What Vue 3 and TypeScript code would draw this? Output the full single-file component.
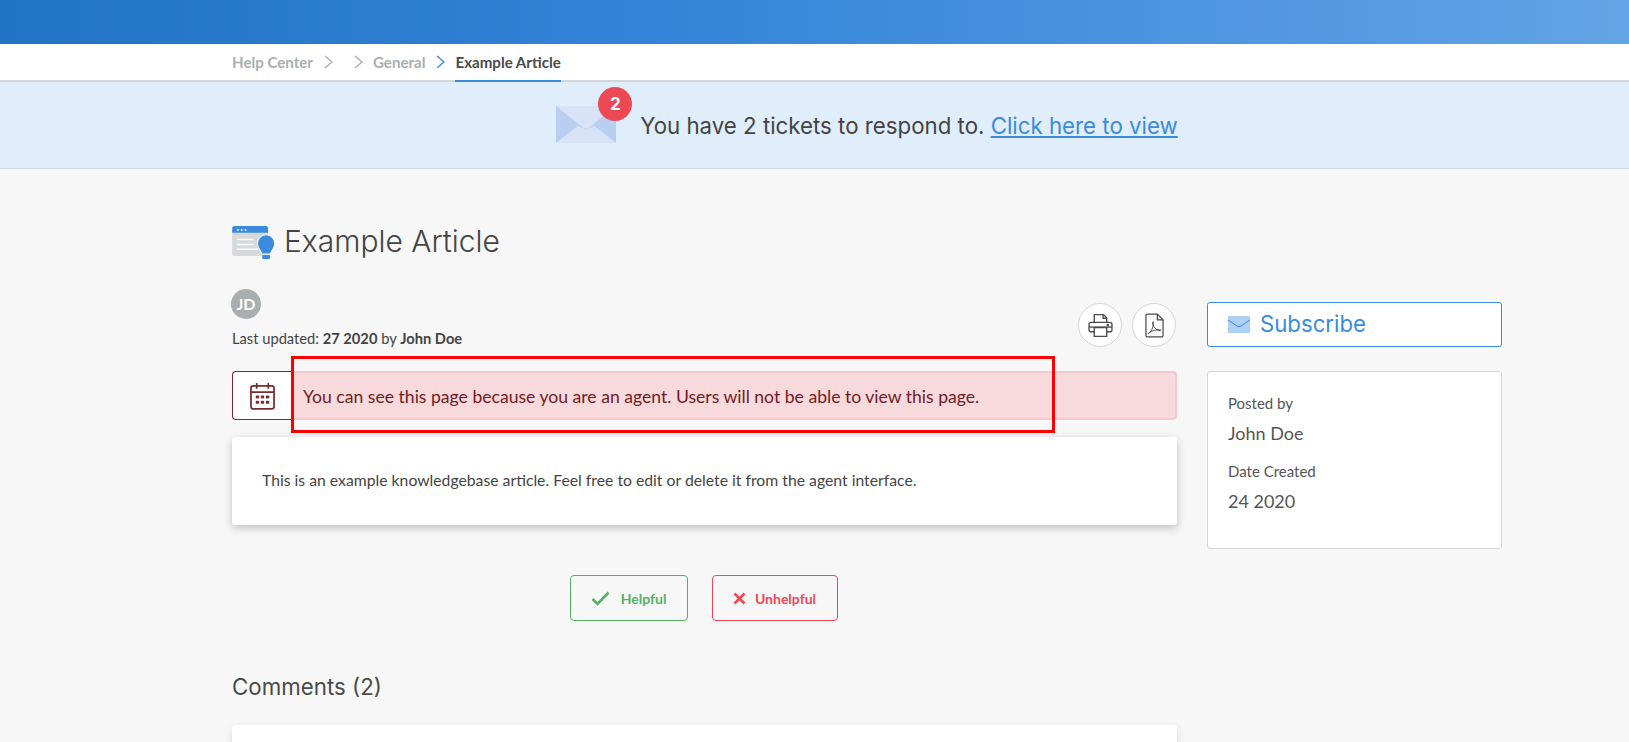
<script setup lang="ts">
const crumbs = [
  { label: 'Help Center', after: true },
  { label: '', after: true },
  { label: 'General', after: true, blue: true },
]
const details = [
  { label: 'Posted by', value: 'John Doe' },
  { label: 'Date Created', value: '24 2020' },
]
</script>

<template>
  <div class="page">
    <header class="topbar"></header>

    <nav class="crumbs">
      <template v-for="crumb in crumbs">
        <span v-if="crumb.label" class="crumb">{{ crumb.label }}</span>
        <svg class="chevron" :class="{ blue: crumb.blue }" viewBox="0 0 9 14" width="9" height="14">
          <path d="M1 1l7 6-7 6" fill="none" stroke="currentColor" stroke-width="1.4" />
        </svg>
      </template>
      <span class="crumb current">Example Article</span>
    </nav>

    <section class="banner">
      <div class="mail">
        <svg viewBox="0 0 60 38" width="60" height="38">
          <rect y="0" width="60" height="37" fill="#d8e3f8" />
          <path d="M0 37V1l24 18h12L60 1v36z" fill="#d8e3f8" />
          <path d="M0 0l26 21q4 3 8 0L60 0v37L38 20q-8 6-16 0L0 37z" fill="#b9cff1" />
          <path d="M60 37H0l22-17q8 6 16 0z" fill="#d8e3f8" />
        </svg>
        <span class="badge">2</span>
      </div>
      <p>You have 2 tickets to respond to. <a href="#">Click here to view</a></p>
    </section>

    <main class="content">
      <h1 class="title">
        <svg viewBox="0 0 44 34" width="43" height="33">
          <rect x="0" y="0" width="37" height="31" rx="2.5" fill="#d5d9da" />
          <path d="M0 7V2.5A2.5 2.5 0 0 1 2.5 0h32A2.5 2.5 0 0 1 37 2.5V7z" fill="#3a8bdf" />
          <circle cx="6" cy="4" r="1" fill="#fff" />
          <circle cx="10" cy="4" r="1" fill="#fff" />
          <circle cx="14" cy="4" r="1" fill="#fff" />
          <path d="M5 14h17M5 19h17M5 24h22" stroke="#fff" stroke-width="1.5" />
          <path d="M35 9a9 9 0 0 1 9 9c0 5-3.400 6.500-4.700 11h-8.600C29.400 24.500 26 23 26 18a9 9 0 0 1 9-9z" fill="#3a8bdf" stroke="#f7f7f7" stroke-width="1.200" />
          <rect x="31" y="30" width="8" height="4" rx="1" fill="#3a8bdf" />
        </svg>
        Example Article
      </h1>

      <div class="columns">
        <div class="main-col">
          <div class="meta-row">
            <div>
              <span class="avatar">JD</span>
              <p class="updated">Last updated: <b>27 2020</b> by <b>John Doe</b></p>
            </div>
            <div class="tools">
              <button class="tool">
                <svg viewBox="0 0 24 24" width="25" height="25" fill="none" stroke="#4a4a4a" stroke-width="1.300">
                  <path d="M6 9V1.500h9l3 3V9" />
                  <path d="M14.500 1.500v3.500H18" />
                  <path d="M6 18H2.500a1.500 1.500 0 0 1-1.500-1.500V11a2 2 0 0 1 2-2h18a2 2 0 0 1 2 2v5.500a1.500 1.500 0 0 1-1.500 1.500H18" />
                  <path d="M1 13.500h22" />
                  <path d="M6 14v8.500h12V14z" />
                  <circle cx="19" cy="11.500" r=".6" fill="#4a4a4a" />
                </svg>
              </button>
              <button class="tool">
                <svg viewBox="0 0 20 26" width="19" height="25" fill="none" stroke="#4a4a4a" stroke-width="1.300">
                  <path d="M1 2.500A1.500 1.500 0 0 1 2.500 1H13l6 6v16.500a1.500 1.500 0 0 1-1.500 1.500h-15A1.500 1.500 0 0 1 1 23.500z" />
                  <path d="M13 1v6h6" />
                  <path d="M3.500 21.500c3-1.500 5-6 5.500-11 .2-2-1-2-1-.5 0 4 4 8.500 8 8.500 1 0 1-1.200-.5-1.200-3.500 0-8 1.200-10.500 3-.6.5-1.500 1.200-1.500.7z" stroke-width="1" />
                </svg>
              </button>
            </div>
          </div>

          <div class="alert-row">
            <div class="alert-icon">
              <svg viewBox="0 0 26 29" width="25" height="28" fill="none" stroke="#7b2a30" stroke-width="1.800">
                <rect x="1" y="4" width="24" height="24" rx="2.500" />
                <path d="M1 10.500h24M7 1v6M19 1v6" />
                <g fill="#7b2a30" stroke="none">
                  <rect x="6" y="14" width="3.500" height="3" />
                  <rect x="11.200" y="14" width="3.500" height="3" />
                  <rect x="16.500" y="14" width="3.500" height="3" />
                  <rect x="6" y="19.500" width="3.500" height="3" />
                  <rect x="11.200" y="19.500" width="3.500" height="3" />
                  <rect x="16.500" y="19.500" width="3.500" height="3" />
                </g>
              </svg>
            </div>
            <div class="alert">You can see this page because you are an agent. Users will not be able to view this page.</div>
          </div>

          <article class="card">This is an example knowledgebase article. Feel free to edit or delete it from the agent interface.</article>

          <div class="votes">
            <button class="vote good">
              <svg viewBox="0 0 19 15" width="19" height="15">
                <path d="M1.500 8l5 5L17.500 1.500" fill="none" stroke="#55b065" stroke-width="2.600" />
              </svg>
              Helpful
            </button>
            <button class="vote bad">
              <svg viewBox="0 0 13 13" width="13" height="13">
                <path d="M1.500 1.500l10 10M11.500 1.500l-10 10" fill="none" stroke="#ec4856" stroke-width="2.600" />
              </svg>
              Unhelpful
            </button>
          </div>

          <h2 class="comments-title">Comments (2)</h2>
          <div class="comment-card"></div>
        </div>

        <aside class="side">
          <button class="subscribe">
            <svg viewBox="0 0 22 17" width="22" height="17">
              <rect width="22" height="17" rx="1" fill="#aed0f4" />
              <path d="M0 4l9 6q2 1.200 4 0l9-6" fill="none" stroke="#3a8bdf" stroke-width="1" />
            </svg>
            Subscribe
          </button>
          <div class="info">
            <div v-for="row in details" :key="row.label" class="info-row">
              <span class="info-label">{{ row.label }}</span>
              <span class="info-value">{{ row.value }}</span>
            </div>
          </div>
        </aside>
      </div>

      <div class="annotation"></div>
    </main>
  </div>
</template>

<style>
html, body { margin: 0; background: #f7f7f7; }
</style>

<style scoped>
.page {
  height: 742px;
  overflow: hidden;
  background: #f7f7f7;
  font-family: Lato, "Liberation Sans", sans-serif;
  color: #444;
}
.topbar {
  height: 44px;
  background: linear-gradient(90deg, #2173c5 0%, #3384d8 40%, #62a4e6 100%);
}
.crumbs {
  height: 36px;
  box-sizing: content-box;
  border-bottom: 2px solid #d2d6d9;
  background: #fff;
  display: flex;
  align-items: center;
  padding-left: 232px;
  font-size: 15.1px;
  font-weight: 700;
}
.crumb { color: #a9aeb0; line-height: 36px; }
.crumb.current {
  color: #4a4a4a;
  height: 38px;
  margin-bottom: -2px;
  border-bottom: 2px solid #3a8bdf;
  box-sizing: border-box;
}
.chevron { color: #a9aeb0; margin: 0 10.5px; }
.chevron.blue { color: #3a8bdf; }
.banner {
  height: 86px;
  background: #e0edfb;
  border-bottom: 1px solid #d2d9e0;
  display: flex;
  justify-content: center;
  align-items: center;
  padding-left: 105px;
  font-family: Inter, sans-serif;
  font-size: 22.27px;
}
.banner p { margin: 0 0 0 24px; }
.banner a { color: #3a8bdf; }
.mail { position: relative; width: 60px; height: 38px; margin-top: 0; }
.mail svg { display: block; }
.badge {
  position: absolute;
  left: 42px;
  top: -19px;
  width: 34px;
  height: 34px;
  border-radius: 50%;
  background: #ec4856;
  color: #fff;
  font-family: Inter, sans-serif;
  font-size: 17px;
  font-weight: 700;
  line-height: 34px;
  text-align: center;
}
.content {
  position: relative;
  width: 1270px;
  margin-left: 232px;
  padding-top: 55px;
}
.title {
  margin: 0;
  display: flex;
  align-items: center;
  gap: 9px;
  font-family: Inter, sans-serif;
  font-size: 30px;
  font-weight: 300;
  line-height: 34px;
  height: 34px;
  color: #444;
}
.title svg { margin-top: 2px; }
.columns { display: flex; gap: 30px; margin-top: 31px; }
.main-col { width: 945px; }
.meta-row { display: flex; justify-content: space-between; align-items: flex-end; }
.avatar {
  display: block;
  width: 30px;
  height: 30px;
  margin-left: -1px;
  border-radius: 50%;
  background: #a9aeae;
  color: #fff;
  font-weight: 700;
  font-size: 16px;
  line-height: 30px;
  text-align: center;
}
.updated { margin: 9px 0 1px; font-size: 14.7px; line-height: 20px; }
.updated b { font-weight: 700; }
.tools { display: flex; gap: 10px; margin: 0 1px 2px 0; }
.tool {
  width: 44px;
  height: 44px;
  border-radius: 50%;
  border: 1px solid #d6d6d6;
  background: #fff;
  padding: 0;
  display: flex;
  align-items: center;
  justify-content: center;
}
.alert-row { display: flex; height: 49px; margin-top: 22px; }
.alert-icon {
  width: 60px;
  box-sizing: border-box;
  border: 1px solid #7b2a30;
  border-right: 0;
  border-radius: 4px 0 0 4px;
  background: #fff;
  display: flex;
  align-items: center;
  justify-content: center;
  padding-right: 1px;
}
.alert {
  flex: 1;
  background: #f8d9dc;
  border: 2px solid #f7c9ce;
  border-left: 0;
  border-radius: 0 4px 4px 0;
  padding-left: 11px;
  color: #721c24;
  font-size: 17.6px;
  line-height: 48px;
}
.card {
  margin-top: 17px;
  height: 88px;
  box-sizing: border-box;
  background: #fff;
  border-radius: 3px;
  box-shadow: 0 3px 8px rgba(0, 0, 0, 0.22);
  padding-left: 30px;
  font-size: 15.75px;
  line-height: 86px;
}
.votes { display: flex; justify-content: center; gap: 24px; margin-top: 50px; padding-right: 2px; }
.vote {
  height: 46px;
  background: transparent;
  border-radius: 4px;
  display: flex;
  align-items: center;
  justify-content: center;
  font-family: Lato, sans-serif;
  font-size: 14px;
  font-weight: 700;
}
.good { width: 118px; gap: 11px; border: 1px solid #55b065; color: #55b065; }
.bad { width: 126px; gap: 9px; border: 1px solid #ec4856; color: #ec4856; }
.comments-title {
  margin: 50px 0 0;
  font-family: Inter, sans-serif;
  font-size: 22.3px;
  font-weight: 400;
  line-height: 32px;
  color: #4a4a4a;
}
.comment-card {
  margin-top: 22px;
  height: 120px;
  background: #fff;
  border-radius: 3px;
  box-shadow: 0 3px 8px rgba(0, 0, 0, 0.12);
}
.side { width: 295px; padding-top: 13px; }
.subscribe {
  width: 100%;
  height: 45px;
  border: 1px solid #3a8bdf;
  border-radius: 3px;
  background: #fff;
  color: #3a8bdf;
  display: flex;
  align-items: center;
  gap: 10px;
  padding: 0 0 2px 20px;
  font-family: Inter, sans-serif;
  font-size: 22.2px;
}
.subscribe svg { margin-top: 2px; }
.info {
  margin-top: 24px;
  height: 178px;
  box-sizing: border-box;
  background: #fff;
  border: 1px solid #d6d6d6;
  border-radius: 3px;
  padding: 19px 19px 19px 20px;
}
.info-row { display: flex; flex-direction: column; margin-bottom: 10px; }
.info-label { font-size: 15px; line-height: 24px; color: #555; }
.info-value { font-size: 18px; line-height: 32px; margin-top: 2px; color: #555; }
.annotation {
  position: absolute;
  left: 59px;
  top: 187px;
  width: 764px;
  height: 77px;
  box-sizing: border-box;
  border: 3px solid #fe0000;
}
</style>
